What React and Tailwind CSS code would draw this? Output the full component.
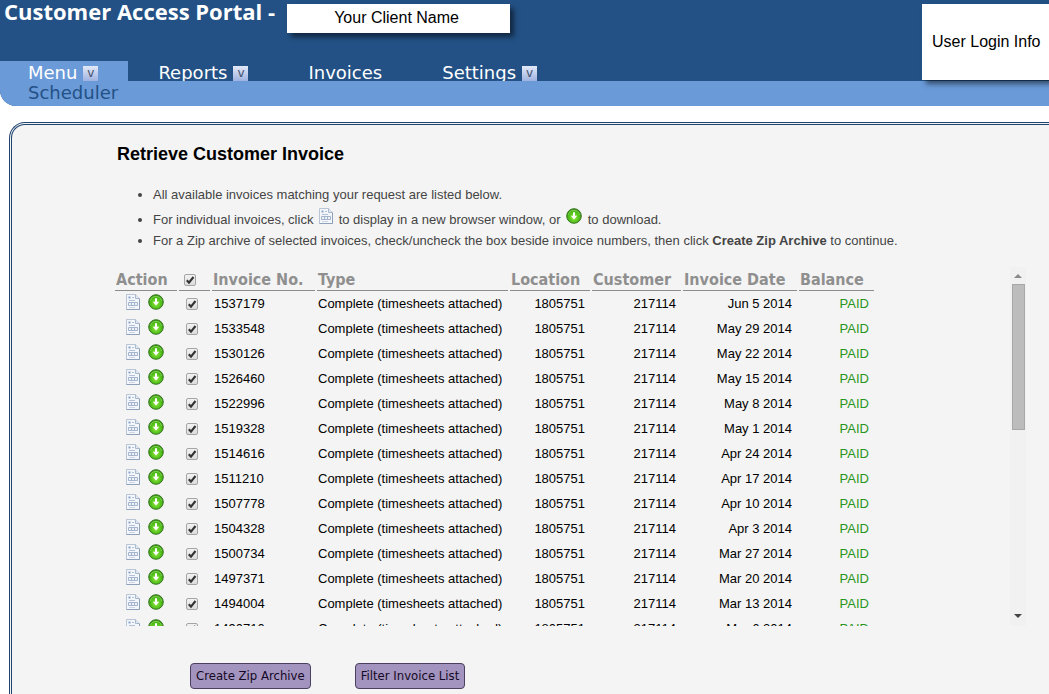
import React from 'react';

const NAV = [
  { label: 'Menu', dropdown: true, active: true },
  { label: 'Reports', dropdown: true },
  { label: 'Invoices' },
  { label: 'Settings', dropdown: true },
];

const INVOICES = [
  { no: '1537179', date: 'Jun 5 2014' },
  { no: '1533548', date: 'May 29 2014' },
  { no: '1530126', date: 'May 22 2014' },
  { no: '1526460', date: 'May 15 2014' },
  { no: '1522996', date: 'May 8 2014' },
  { no: '1519328', date: 'May 1 2014' },
  { no: '1514616', date: 'Apr 24 2014' },
  { no: '1511210', date: 'Apr 17 2014' },
  { no: '1507778', date: 'Apr 10 2014' },
  { no: '1504328', date: 'Apr 3 2014' },
  { no: '1500734', date: 'Mar 27 2014' },
  { no: '1497371', date: 'Mar 20 2014' },
  { no: '1494004', date: 'Mar 13 2014' },
  { no: '1490710', date: 'Mar 6 2014' },
];

function DocIcon() {
  return (
    <svg width="14" height="16" viewBox="0 0 14 16" className="inline-block align-baseline" aria-hidden="true">
      <path d="M.5.5h9l4 4v11H.5z" fill="#f3f7fb" stroke="#b9c5d4" />
      <path d="M13.5 4.5v11H.5" fill="none" stroke="#8fa1ba" />
      <path d="M9.5.5v4h4" fill="#dfe8f3" stroke="#a9b8cd" />
      <path d="M2.5 2.5h2v2h-2z" fill="#8ba3c4" />
      <path d="M6 3.5h2M3 6.5h6" stroke="#b3c1d4" />
      <path d="M2.5 8.5h9v3h-9zM5.5 8.5v3M8.5 8.5v3" fill="#eef3f9" stroke="#a3b4cc" />
      <path d="M3 13.5h6" stroke="#cdd6e2" />
    </svg>
  );
}

function DownloadIcon() {
  return (
    <svg width="16" height="16" viewBox="0 0 16 16" className="inline-block align-baseline" aria-hidden="true">
      <defs>
        <radialGradient id="download-fill" cx="50%" cy="60%" r="60%">
          <stop offset="0" stopColor="#9aea46" />
          <stop offset="0.6" stopColor="#4fbf18" />
          <stop offset="1" stopColor="#36940f" />
        </radialGradient>
      </defs>
      <circle cx="8" cy="8" r="7.3" fill="url(#download-fill)" stroke="#3a7524" />
      <path d="M2.5 7a5.6 5.6 0 0 1 11 0" fill="none" stroke="#a4e278" opacity="0.6" />
      <path d="M7 4.2h2v3.6h2.2L8 11.6 4.8 7.8H7z" fill="#fff" />
    </svg>
  );
}

function Checkbox({ label }) {
  return (
    <span className="relative inline-block size-3 align-middle">
      <input
        type="checkbox"
        defaultChecked
        aria-label={label}
        className="peer block size-3 appearance-none rounded-xs border border-[#a5a5a5] bg-linear-to-b from-[#f2f2f2] to-[#dcdcdc]"
      />
      <svg
        viewBox="0 0 12 12"
        className="pointer-events-none absolute inset-0 hidden size-3 peer-checked:block"
        aria-hidden="true"
      >
        <path d="M2.8 6.2 5 8.6 9.5 3" fill="none" stroke="#333" strokeWidth="2.1" />
      </svg>
    </span>
  );
}

function Header() {
  return (
    <header className="overflow-hidden rounded-bl-2xl bg-[#235185]">
      <div className="flex items-start justify-between">
        <div className="flex h-[81px] flex-1 flex-col justify-between">
          <div className="flex items-start pl-1">
            <h1 className="font-['Open_Sans','Noto_Sans',sans-serif] text-[22px] leading-[22px] font-bold whitespace-nowrap text-white">
              Customer Access Portal -
            </h1>
            <div className="mt-1 ml-3 h-[29px] w-[223px] bg-white pr-1 text-center text-base leading-7 text-black shadow-[4px_4px_5px_rgba(0,0,0,0.5)]">
              Your Client Name
            </div>
          </div>
          <nav className="flex h-5 font-['DejaVu_Sans',sans-serif] text-[18px] leading-6 text-white">
            {NAV.map((item) => (
              <a
                key={item.label}
                href="#"
                className={
                  item.active
                    ? 'flex gap-1.5 bg-[#6a9ad8] pr-[30px] pl-7'
                    : 'flex gap-1.5 px-[30px]'
                }
              >
                {item.label}
                {item.dropdown && (
                  <span className="mt-[5px] h-[15px] w-[15px] bg-linear-to-b from-[#e3e9f7] to-[#9fb2e0] text-center text-[12px] leading-3.5 text-[#44506e]">
                    v
                  </span>
                )}
              </a>
            ))}
          </nav>
        </div>
        <div className="relative z-10 mt-1 flex h-[76px] w-[127px] items-center bg-white pl-2.5 text-base whitespace-nowrap text-black shadow-[4px_4px_5px_rgba(0,0,0,0.5)]">
          User Login Info
        </div>
      </div>
      {/* sits over the descenders of the tab row */}
      <div className="relative h-[25px] bg-[#6a9ad8] pl-7 font-['DejaVu_Sans',sans-serif] text-[18px] leading-6 text-[#235185]">
        <a href="#">Scheduler</a>
      </div>
    </header>
  );
}

const TH = 'h-[22px] border-b border-[#8c8c8c] p-0 pl-px text-left align-middle leading-5';
const TD = 'p-0 align-top leading-[21px]';
const TD_RIGHT = 'p-0 pr-[5px] text-right align-top leading-[21px]';

function InvoiceTable() {
  return (
    <table className="w-[763px] table-fixed border-separate border-spacing-[2px] text-[13px] whitespace-nowrap text-black">
      <colgroup>
        <col className="w-[62px]" />
        <col className="w-[31px]" />
        <col className="w-[103px]" />
        <col className="w-[191px]" />
        <col className="w-[80px]" />
        <col className="w-[89px]" />
        <col className="w-[114px]" />
        <col className="w-[75px]" />
      </colgroup>
      <thead className="font-['DejaVu_Sans_Condensed','Noto_Sans',sans-serif] text-base text-[#8f8f8f]">
        <tr>
          <th className={TH}>Action</th>
          <th className={TH}>
            <span className="flex pl-1">
              <Checkbox label="Select all invoices" />
            </span>
          </th>
          <th className={TH}>Invoice No.</th>
          <th className={TH}>Type</th>
          <th className={TH}>Location</th>
          <th className={TH}>Customer</th>
          <th className={TH}>Invoice Date</th>
          <th className={TH}>Balance</th>
        </tr>
      </thead>
      <tbody>
        {INVOICES.map((inv) => (
          <tr key={inv.no} className="h-[23px]">
            <td className={TD}>
              <span className="flex items-center gap-2 pt-px pl-[11px]">
                <button type="button" aria-label={`Display invoice ${inv.no}`} className="flex">
                  <DocIcon />
                </button>
                <button type="button" aria-label={`Download invoice ${inv.no}`} className="flex">
                  <DownloadIcon />
                </button>
              </span>
            </td>
            <td className={TD}>
              <span className="flex pt-[5px] pl-[7px]">
                <Checkbox label={`Select invoice ${inv.no}`} />
              </span>
            </td>
            <td className={TD}>
              <span className="pl-0.5">{inv.no}</span>
            </td>
            <td className={TD}>
              <span className="pl-px">Complete (timesheets attached)</span>
            </td>
            <td className={TD_RIGHT}>1805751</td>
            <td className={TD_RIGHT}>217114</td>
            <td className={TD_RIGHT}>{inv.date}</td>
            <td className={TD_RIGHT}>
              <span className="text-[#2a9420]">PAID</span>
            </td>
          </tr>
        ))}
      </tbody>
    </table>
  );
}

function ScrollBar() {
  return (
    <div className="flex w-4 flex-col items-center bg-[#f1f1f1]" aria-hidden="true">
      <svg width="16" height="17" viewBox="0 0 16 17">
        <path d="M4 11h8L8 7z" fill="#8a8a8a" />
      </svg>
      <div className="h-[146px] w-[13px] border border-[#a8a8a8] bg-[#bcbcbc]" />
      <svg width="16" height="17" viewBox="0 0 16 17" className="mt-auto">
        <path d="M4 5h8l-4 4z" fill="#444" />
      </svg>
    </div>
  );
}

const BUTTON =
  "h-[26px] rounded border border-[#4c4060] bg-[#a393bf] px-[5px] font-['DejaVu_Sans_Condensed','Noto_Sans',sans-serif] text-[13px] leading-6 text-[#140a24]";

export default function App() {
  return (
    <div className="flex min-h-screen flex-col overflow-x-hidden bg-white font-['Liberation_Sans',Arial,sans-serif]">
      <Header />
      <main className="mt-4 ml-[9px] flex-1 rounded-tl-2xl border-t-3 border-l-3 border-double border-[#1f4470] bg-[#f4f4f4] pb-1">
        <div className="pt-[17px] pr-[23px] pl-[101px]">
          <h2 className="pl-1 text-[18px] leading-6 font-bold text-black">Retrieve Customer Invoice</h2>
          <ul className="mt-[18px] list-disc pl-10 text-[13px] leading-[21px] text-[#444]">
            <li>All available invoices matching your request are listed below.</li>
            <li className="mt-[3px]">
              For individual invoices, click{' '}
              <span className="px-0.5">
                <DocIcon />
              </span>{' '}
              to display in a new browser window, or{' '}
              <span className="px-0.5">
                <DownloadIcon />
              </span>{' '}
              to download.
            </li>
            <li>
              For a Zip archive of selected invoices, check/uncheck the box beside invoice numbers,
              then click <b>Create Zip Archive</b> to continue.
            </li>
          </ul>
          <div className="mt-4 flex h-[359px] justify-between overflow-hidden">
            <InvoiceTable />
            <ScrollBar />
          </div>
          <div className="mt-[37px] flex gap-11 pl-[77px]">
            <button type="button" className={BUTTON}>
              Create Zip Archive
            </button>
            <button type="button" className={BUTTON}>
              Filter Invoice List
            </button>
          </div>
        </div>
      </main>
    </div>
  );
}
